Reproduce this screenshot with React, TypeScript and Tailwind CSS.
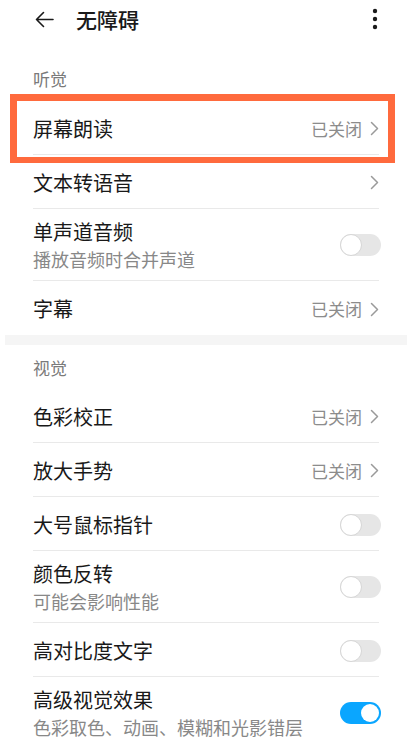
import React from "react";

type Row =
  | { kind: "nav"; title: string; value?: string; last?: boolean }
  | { kind: "toggle"; title: string; sub?: string; on?: boolean; last?: boolean };

function Chevron() {
  return (
    <svg width="9" height="15" viewBox="0 0 9 15" className="ml-[8px] shrink-0">
      <path d="M1.5 1.5 L7.5 7.5 L1.5 13.5" fill="none" stroke="#9a9a9a" strokeWidth="1.5" strokeLinecap="round" strokeLinejoin="round" />
    </svg>
  );
}

function Toggle({ on }: { on?: boolean }) {
  if (on) {
    return (
      <div className="w-[41px] h-[22px] rounded-full bg-[#0aa6ff] flex items-center justify-end pr-[2px] shrink-0">
        <div className="w-[18px] h-[18px] rounded-full bg-white" />
      </div>
    );
  }
  return (
    <div className="w-[41px] h-[22px] rounded-full bg-[#e6e6e6] flex items-center shrink-0">
      <div className="w-[22px] h-[22px] rounded-full bg-white border border-[#d6d6d6]" />
    </div>
  );
}

function ListRow({ row }: { row: Row }) {
  const border = row.last ? "" : "border-b border-[#e9e9e9]";
  if (row.kind === "nav") {
    return (
      <div className={`h-[54px] flex items-center justify-between pt-[2px] ${border}`}>
        <span className="text-[20px] leading-[28px] text-[#191919]">{row.title}</span>
        <div className="flex items-center">
          {row.value && <span className="text-[17px] leading-[24px] text-[#8c8c8c]">{row.value}</span>}
          <Chevron />
        </div>
      </div>
    );
  }
  return (
    <div className={`${row.sub ? "h-[72px]" : "h-[54px] pt-[2px]"} flex items-center justify-between ${border}`}>
      <div className="flex flex-col">
        <span className="text-[20px] leading-[28px] text-[#191919]">{row.title}</span>
        {row.sub && <span className="text-[18px] leading-[26px] text-[#888888]">{row.sub}</span>}
      </div>
      <div className="mr-[-2px]">
        <Toggle on={row.on} />
      </div>
    </div>
  );
}

export default function App() {
  const hearing: Row[] = [
    { kind: "nav", title: "屏幕朗读", value: "已关闭" },
    { kind: "nav", title: "文本转语音" },
    { kind: "toggle", title: "单声道音频", sub: "播放音频时合并声道" },
    { kind: "nav", title: "字幕", value: "已关闭", last: true },
  ];
  const vision: Row[] = [
    { kind: "nav", title: "色彩校正", value: "已关闭" },
    { kind: "nav", title: "放大手势", value: "已关闭" },
    { kind: "toggle", title: "大号鼠标指针" },
    { kind: "toggle", title: "颜色反转", sub: "可能会影响性能" },
    { kind: "toggle", title: "高对比度文字" },
    { kind: "toggle", title: "高级视觉效果", sub: "色彩取色、动画、模糊和光影错层", on: true, last: true },
  ];
  return (
    <div
      className="relative w-[409px] h-[743px] overflow-hidden bg-white"
      style={{ fontFamily: '"Noto Sans CJK SC", "Noto Sans", sans-serif' }}
    >
      {/* header */}
      <div className="h-[38px] flex items-center pl-[35px] pr-[31px]">
        <svg width="19" height="17" viewBox="0 0 19 17" className="shrink-0">
          <path d="M18 8.5 H1.5 M8.5 1.5 L1.5 8.5 L8.5 15.5" fill="none" stroke="#1a1a1a" strokeWidth="1.6" strokeLinecap="round" strokeLinejoin="round" />
        </svg>
        <span className="ml-[22px] text-[21px] leading-[28px] font-medium text-[#1a1a1a]">无障碍</span>
        <div className="flex-1" />
        <svg width="6" height="22" viewBox="0 0 6 22">
          <circle cx="3" cy="3" r="2.2" fill="#1a1a1a" />
          <circle cx="3" cy="11" r="2.2" fill="#1a1a1a" />
          <circle cx="3" cy="19" r="2.2" fill="#1a1a1a" />
        </svg>
      </div>

      {/* 听觉 */}
      <div className="h-[63px] flex items-end pb-[10px] pl-[33px]">
        <span className="text-[17px] leading-[24px] text-[#7a7a7a]">听觉</span>
      </div>
      <div className="pl-[33px] pr-[30px]">
        {hearing.map((r) => (
          <ListRow key={r.title} row={r} />
        ))}
      </div>

      <div className="h-[10px] ml-[5px] mr-[2px] bg-[#f5f5f5]" />

      {/* 视觉 */}
      <div className="h-[44px] flex items-end pb-[9px] pl-[33px]">
        <span className="text-[17px] leading-[24px] text-[#7a7a7a]">视觉</span>
      </div>
      <div className="pl-[33px] pr-[30px]">
        {vision.map((r) => (
          <ListRow key={r.title} row={r} />
        ))}
      </div>

      {/* annotation highlight */}
      <div className="absolute left-[10px] top-[94px] w-[385px] h-[69px] border-[7px] border-b-[6px] border-[#ff6a3d] pointer-events-none" />
    </div>
  );
}
